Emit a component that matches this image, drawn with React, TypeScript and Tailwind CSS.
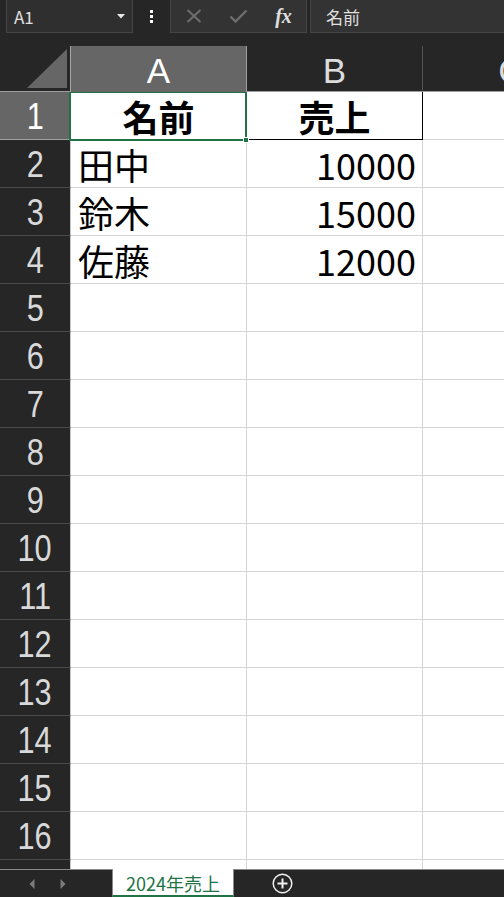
import React from "react";

const rowH = "h-[48px]";

type Cell = { a?: string; b?: string };

const data: Record<number, Cell> = {
  1: { a: "名前", b: "売上" },
  2: { a: "田中", b: "10000" },
  3: { a: "鈴木", b: "15000" },
  4: { a: "佐藤", b: "12000" },
};

const numFont = { fontFamily: '"Liberation Sans", Arial, sans-serif' };
const cellFont = { fontFamily: '"Noto Sans CJK JP", "Noto Sans", sans-serif' };
const uiFont = { fontFamily: '"Noto Sans CJK JP", "Noto Sans", sans-serif' };
const latinFont = { fontFamily: '"Liberation Sans", Arial, sans-serif' };

function Row({ n }: { n: number }) {
  const d = data[n] || {};
  const selected = n === 1;
  return (
    <div className={`flex shrink-0 ${rowH}`}>
      <div
        className={`w-[71px] shrink-0 flex items-center justify-center border-r border-[#c8c8c8] border-b ${
          selected ? "bg-[#666666] border-b-[#a0a0a0] text-white" : "bg-[#262626] border-b-[#4a4a4a] text-[#d9d9d9]"
        }`}
      >
        <span className="inline-block text-[37px] leading-[1.15] pt-[3px] scale-x-[0.83]" style={numFont}>
          {n}
        </span>
      </div>
      <div className="relative w-[176px] shrink-0 bg-white border-r border-b border-[#d4d4d4] flex items-center">
        <span
          className={`flex-1 flex text-black text-[36px] leading-[1.15] pt-[2px] ${
            selected ? "justify-center font-bold" : "justify-start pl-[7px]"
          }`}
          style={cellFont}
        >
          {d.a}
        </span>
        {selected && (
          <div className="absolute -left-[2px] -top-[1px] -right-[1px] -bottom-[2px] border-2 border-[#217346] z-10 pointer-events-none">
            <div className="absolute -right-[4px] -bottom-[4px] w-[6px] h-[6px] bg-[#217346] border border-white" />
          </div>
        )}
      </div>
      <div
        className={`w-[176px] shrink-0 bg-white border-r border-b flex items-center ${
          selected ? "border-black" : "border-[#d4d4d4]"
        }`}
      >
        <span
          className={`flex-1 flex text-black text-[36px] leading-[1.15] pt-[2px] ${
            selected ? "justify-center font-bold" : "justify-end pr-[6px]"
          }`}
          style={cellFont}
        >
          {d.b}
        </span>
      </div>
      <div className="w-[176px] shrink-0 bg-white border-r border-b border-[#d4d4d4]" />
    </div>
  );
}

export default function App() {
  const rows = Array.from({ length: 16 }, (_, i) => i + 1);
  return (
    <div className="w-[504px] h-[897px] overflow-hidden bg-[#262626] flex flex-col">
      {/* Top bar */}
      <div className="h-[46px] shrink-0 flex items-start">
        <div className="ml-[6px] w-[127px] h-[33px] bg-[#2f2f2f] border border-t-0 border-[#454545] flex items-center justify-between pl-[7px] pr-[7px]">
          <span className="text-[17px] text-[#e0e0e0] leading-none" style={uiFont}>
            A1
          </span>
          <svg width="8" height="5" viewBox="0 0 8 5">
            <path d="M0 0 L8 0 L4 4.5 Z" fill="#e8e8e8" />
          </svg>
        </div>
        <div className="w-[37px] h-[33px] flex flex-col items-center justify-center gap-[2px]">
          <div className="w-[3px] h-[3px] bg-white" />
          <div className="w-[3px] h-[3px] bg-white" />
          <div className="w-[3px] h-[3px] bg-white" />
        </div>
        <div className="w-[137px] h-[33px] bg-[#333333] border border-t-0 border-[#454545] flex items-center">
          <div className="w-[45px] flex justify-center">
            <svg width="16" height="14" viewBox="0 0 16 14">
              <path d="M1.5 1 L14.5 13 M14.5 1 L1.5 13" stroke="#6e6e6e" strokeWidth="2" />
            </svg>
          </div>
          <div className="w-[45px] flex justify-center">
            <svg width="19" height="15" viewBox="0 0 19 15">
              <path d="M1.5 7.5 L6.5 12.5 L17.5 1.5" stroke="#6e6e6e" strokeWidth="2.4" fill="none" />
            </svg>
          </div>
          <div className="w-[45px] flex justify-center">
            <span
              className="text-[20px] italic font-bold text-[#e0e0e0] leading-none"
              style={{ fontFamily: '"Liberation Serif", "Times New Roman", serif' }}
            >
              fx
            </span>
          </div>
        </div>
        <div className="ml-[3px] flex-1 h-[33px] bg-[#333333] border-l border-b border-[#454545] flex items-center pl-[15px]">
          <span className="text-[17px] text-[#e0e0e0] leading-none" style={uiFont}>
            名前
          </span>
        </div>
      </div>

      {/* Column header */}
      <div className="h-[46px] shrink-0 flex">
        <div className="w-[71px] shrink-0 border-r border-[#a8a8a8] border-b border-b-[#9e9e9e] flex items-end justify-end pr-[3px] pb-[3px]">
          <svg width="40" height="39" viewBox="0 0 40 39">
            <path d="M40 0 L40 39 L0 39 Z" fill="#666666" />
          </svg>
        </div>
        <div
          className="w-[176px] shrink-0 bg-[#666666] border-r border-[#a0a0a0] flex items-center justify-center text-white text-[35px] leading-[1.2] pt-[4px]"
          style={latinFont}
        >
          A
        </div>
        <div
          className="w-[176px] shrink-0 border-r border-[#555555] border-b border-b-[#9e9e9e] flex items-center justify-center text-[#dcdcdc] text-[35px] leading-[1.2] pt-[4px]"
          style={latinFont}
        >
          B
        </div>
        <div
          className="w-[176px] shrink-0 border-b border-[#9e9e9e] flex items-center justify-center text-[#dcdcdc] text-[35px] leading-[1.2] pt-[4px]"
          style={latinFont}
        >
          C
        </div>
      </div>

      {/* Rows */}
      <div className="flex-1 min-h-0 overflow-hidden flex flex-col">
        {rows.map((n) => (
          <Row key={n} n={n} />
        ))}
        <div className="flex shrink-0 h-[48px]">
          <div className="w-[71px] shrink-0 bg-[#262626] border-r border-[#c8c8c8]" />
          <div className="w-[176px] shrink-0 bg-white border-r border-[#d4d4d4]" />
          <div className="w-[176px] shrink-0 bg-white border-r border-[#d4d4d4]" />
          <div className="w-[176px] shrink-0 bg-white" />
        </div>
      </div>

      {/* Tab bar */}
      <div className="h-[28px] shrink-0 flex">
        <div className="w-[112px] shrink-0 border-t border-[#8a8a8a] flex items-center">
          <div className="ml-[29px]">
            <svg width="6" height="10" viewBox="0 0 6 10">
              <path d="M5.5 0 L5.5 10 L0.5 5 Z" fill="#7a7a7a" />
            </svg>
          </div>
          <div className="ml-[25px]">
            <svg width="6" height="10" viewBox="0 0 6 10">
              <path d="M0.5 0 L0.5 10 L5.5 5 Z" fill="#7a7a7a" />
            </svg>
          </div>
        </div>
        <div
          className="w-[122px] shrink-0 bg-white border-x border-[#8a8a8a] border-b-2 border-b-[#217346] flex items-center justify-center text-[18px] text-[#217346] leading-none pt-[1px]"
          style={uiFont}
        >
          2024年売上
        </div>
        <div className="flex-1 border-t border-[#8a8a8a] flex items-center">
          <div className="ml-[38px]">
            <svg width="21" height="21" viewBox="0 0 21 21">
              <circle cx="10.5" cy="10.5" r="9.3" stroke="#f0f0f0" strokeWidth="1.5" fill="none" />
              <path d="M10.5 5.5 L10.5 15.5 M5.5 10.5 L15.5 10.5" stroke="#f0f0f0" strokeWidth="2" />
            </svg>
          </div>
        </div>
      </div>
    </div>
  );
}
